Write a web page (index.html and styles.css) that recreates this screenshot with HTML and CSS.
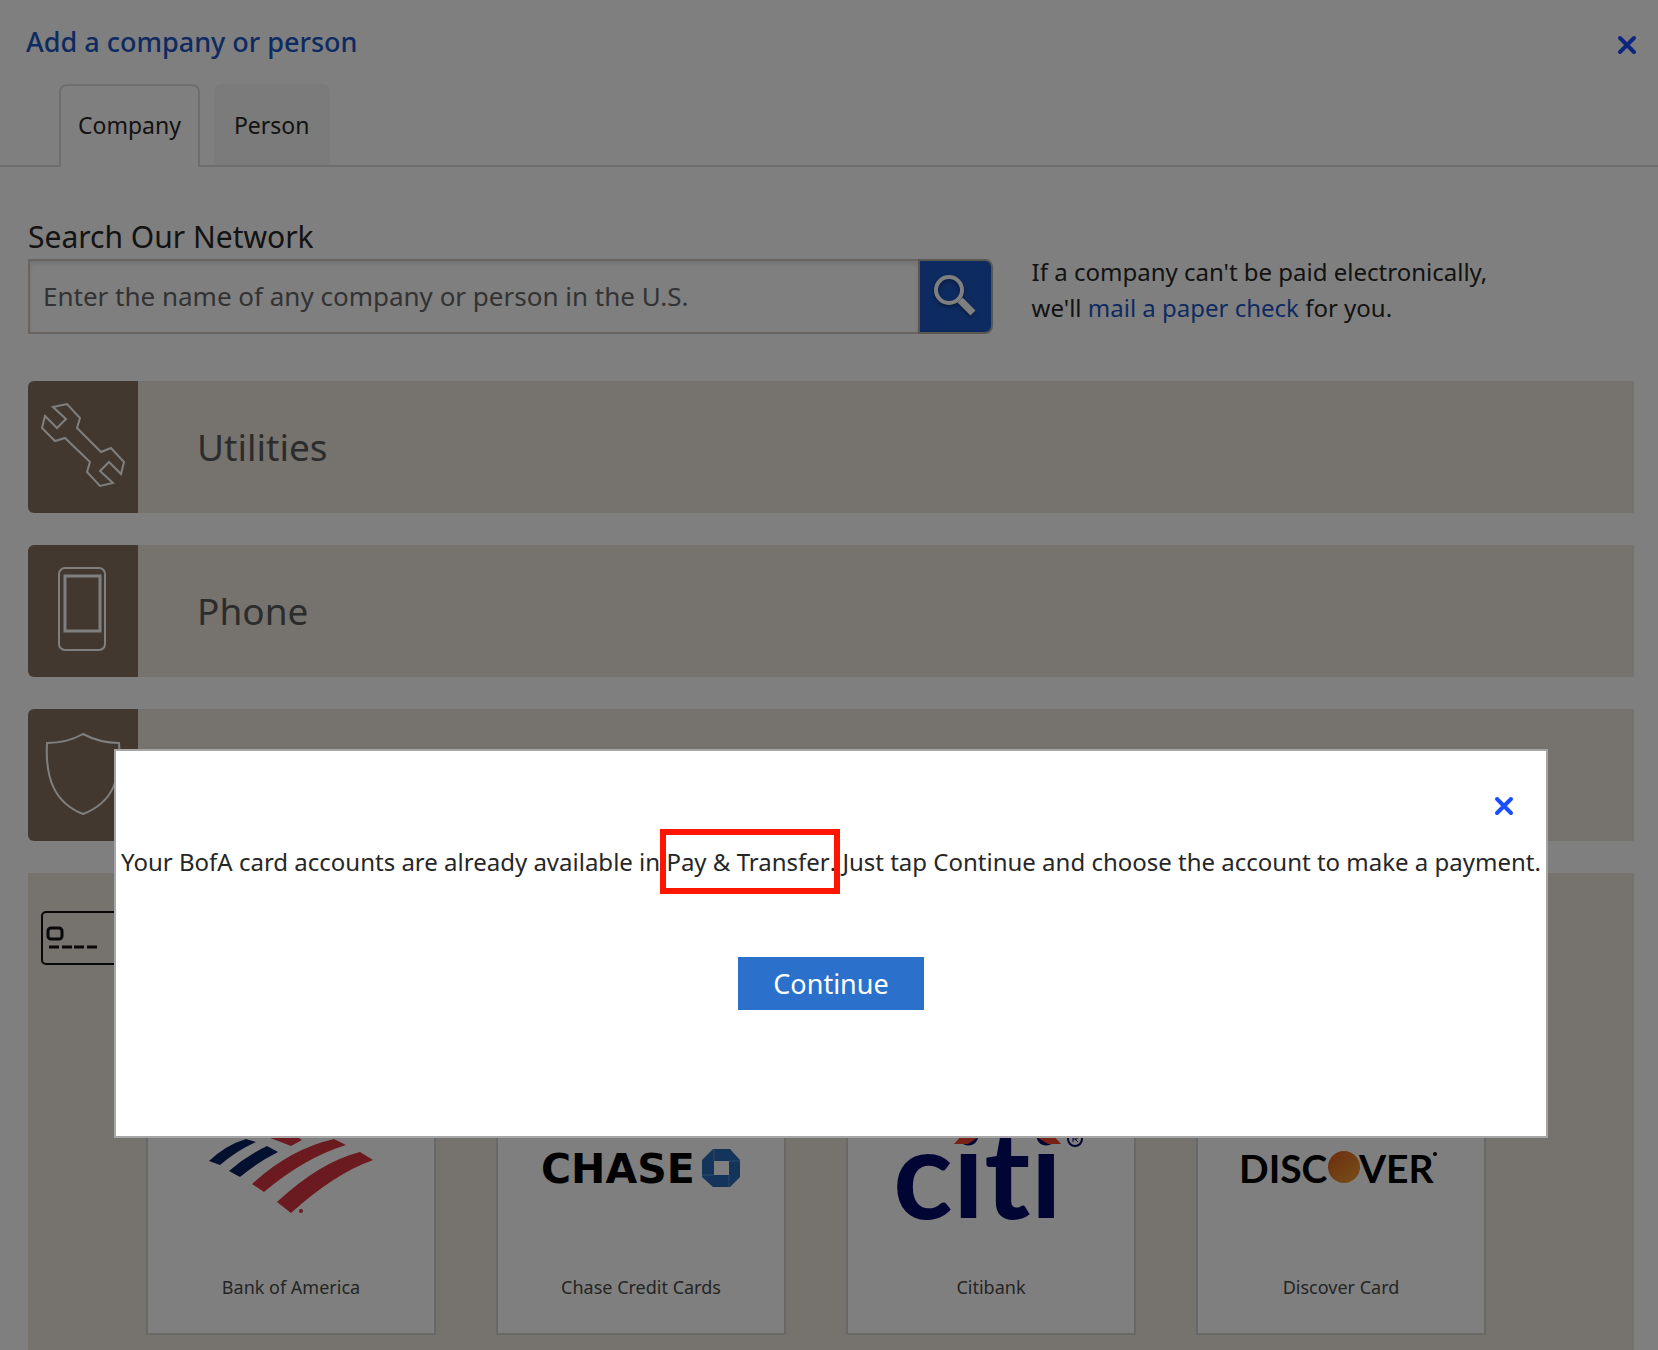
FILE: index.html
```html
<!DOCTYPE html>
<html lang="en">
<head>
<meta charset="utf-8">
<title>Add a company or person</title>
<link rel="stylesheet" href="styles.css">
</head>
<body>
<div class="page">
  <header class="header">
    <h1 class="title">Add a company or person</h1>
    <button class="close" type="button" aria-label="Close">
      <svg width="20" height="20" viewBox="0 0 20 20"><path d="M3 3L17 17M17 3L3 17" stroke="currentColor" stroke-width="4" stroke-linecap="round"/></svg>
    </button>
  </header>
  <nav class="tabs">
    <button class="tab tab-active" type="button">Company</button>
    <button class="tab" type="button">Person</button>
  </nav>
  <main class="main">
    <label class="search-label" for="search">Search Our Network</label>
    <div class="search-row">
      <form class="search">
        <input class="search-input" id="search" type="text" placeholder="Enter the name of any company or person in the U.S.">
        <button class="search-button" type="button" aria-label="Search">
          <svg class="search-icon" width="44" height="44" viewBox="0 0 44 44" fill="none" stroke="#fff"><circle cx="16" cy="15" r="13" stroke-width="4"/><path d="M27 25L40 38" stroke-width="7"/></svg>
        </button>
      </form>
      <p class="hint">If a company can't be paid electronically,<br>we'll <a class="link" href="#check">mail a paper check</a> for you.</p>
    </div>
    <section class="category">
      <div class="category-icon">
        <svg width="86" height="86" viewBox="0 0 86 86" fill="none" stroke="#fff" stroke-width="2"><path d="M13 5L27 2L40 16L37 26L61 50L71 46L84 60L81 72L69 60L60 69L73 81L60 84L47 70L50 60L25 36L15 39L2 26L5 14L17 26L26 17Z"/></svg>
      </div>
      <h2 class="category-name">Utilities</h2>
    </section>
    <section class="category">
      <div class="category-icon">
        <svg width="86" height="86" viewBox="0 0 86 86" fill="none" stroke="#fff" stroke-width="2"><rect x="19" y="2" width="46" height="82" rx="6"/><rect x="25" y="10" width="35" height="55" stroke-width="3"/></svg>
      </div>
      <h2 class="category-name">Phone</h2>
    </section>
    <section class="category">
      <div class="category-icon">
        <svg width="86" height="86" viewBox="0 0 86 86" fill="none" stroke="#fff" stroke-width="2"><path d="M7 13Q27 13 43 4Q60 13 79 13C82 49 72 73 43 84C15 73 5 49 7 13Z"/></svg>
      </div>
      <h2 class="category-name">Insurance</h2>
    </section>
    <section class="category-open">
      <div class="open-head">
        <svg width="86" height="56" viewBox="0 0 86 56" fill="none" stroke="#111" stroke-width="2"><rect x="2" y="2" width="82" height="52" rx="4"/><rect x="8" y="18" width="14" height="11" rx="3" stroke-width="3"/><path d="M9 37H19M22 37H32M34 37H44M47 37H57" stroke-width="3"/></svg>
        <h2 class="category-name">Credit Cards</h2>
      </div>
      <div class="cards">
        <a class="card" href="#boa"><svg class="logo" width="200" height="120" viewBox="191 1109 200 120" aria-hidden="true"><path fill="#082060" d="M209 1161Q226 1145 246 1139L256 1142Q236 1151 220 1165ZM229 1171Q246 1156 267 1146L278 1152Q258 1162 240 1177Z"/><path fill="#d6363e" d="M252 1184Q290 1149 334 1139L346 1145Q304 1158 264 1192ZM277 1202Q320 1162 360 1152L373 1160Q334 1174 291 1213ZM260 1134L280 1126L302 1140L291 1146Z"/><circle cx="301" cy="1211" r="2" fill="#d6363e"/></svg><span class="card-name">Bank of America</span></a>
        <a class="card" href="#chase"><svg class="logo" width="200" height="120" viewBox="541 1109 200 120" aria-hidden="true"><text x="541" y="1183" class="chase-word">CHASE</text><path fill="#2a68b8" fill-rule="evenodd" d="M713 1149H730L740 1160V1177L730 1187H713L702 1177V1160ZM714 1161V1175H729V1161Z"/><path d="M714 1149V1161M740 1161H729M729 1187V1175M702 1175H714" stroke="#5d94cf"/></svg><span class="card-name">Chase Credit Cards</span></a>
        <a class="card" href="#citi"><svg class="logo" width="200" height="120" viewBox="891 1109 200 120" aria-hidden="true"><text x="893" y="1219" class="citi-word">citi</text><path d="M954 1144Q1007 1082 1061 1144H1048Q1007 1115 968 1144Z" fill="#f0402a"/><circle cx="1075" cy="1139" r="7" fill="none" stroke="#000a68" stroke-width="2"/><path d="M1073 1142V1136H1077V1139H1073M1075 1139L1078 1142" fill="none" stroke="#000a68"/></svg><span class="card-name">Citibank</span></a>
        <a class="card" href="#discover"><svg class="logo" width="200" height="120" viewBox="1241 1109 200 120" aria-hidden="true"><defs><linearGradient id="sun" x2="1" y2="1"><stop stop-color="#d85a20"/><stop offset="1" stop-color="#f0a030"/></linearGradient></defs><text x="1239" y="1183" class="discover-word">DISC</text><circle cx="1344" cy="1167" r="16" fill="url(#sun)"/><text x="1359" y="1183" class="discover-word">VER</text><circle cx="1435" cy="1154" r="2"/></svg><span class="card-name">Discover Card</span></a>
      </div>
    </section>
  </main>
</div>
<div class="overlay">
  <div class="dialog" role="dialog" aria-modal="true" aria-label="Pay and Transfer">
    <button class="close dialog-close" type="button" aria-label="Close">
      <svg width="20" height="20" viewBox="0 0 20 20"><path d="M3 3L17 17M17 3L3 17" stroke="currentColor" stroke-width="4" stroke-linecap="round"/></svg>
    </button>
    <p class="message">Your BofA card accounts are already available in <span class="highlight">Pay &amp; Transfer</span>. Just tap Continue and choose the account to make a payment.</p>
    <button class="continue" type="button">Continue</button>
  </div>
</div>
</body>
</html>
```
FILE: styles.css
```css
* { box-sizing: border-box; }
body { margin: 0; height: 100vh; overflow: hidden; background: #fff; color: #262626; font-family: "Noto Sans", "Open Sans", sans-serif; }
button { font: inherit; margin: 0; padding: 0; border: 0; cursor: pointer; }
h1, h2, p { margin: 0; font-weight: 400; }
.header { display: flex; justify-content: space-between; align-items: flex-start; height: 84px; padding: 0 21px 0 26px; color: #1c56c3; }
.header .close { margin-top: 35px; }
.title { font-size: 27px; line-height: 84px; font-weight: 500; }
.close { display: flex; background: none; color: #1a4dff; }
.tabs { display: flex; gap: 14px; height: 83px; padding-left: 59px; border-bottom: 2px solid #dcdcdc; }
.tab { height: 81px; padding: 0 20px; border-radius: 8px 8px 0 0; background: #f6f6f6; color: #262626; font-size: 23px; }
.tab-active { height: 83px; padding: 0 17px 4px; border: 2px solid #dcdcdc; border-bottom: 0; background: #fff; }
.main { padding: 48px 24px 0 28px; }
.search-label { display: block; font-size: 30px; line-height: 44px; }
.search-row { display: flex; gap: 39px; }
.search { display: flex; flex: 0 0 calc(60% + 1px); height: 75px; }
.search-input { flex: 1; min-width: 0; padding: 0 13px 2px; border: 2px solid #d3c9c1; border-right: 0; border-radius: 0; box-shadow: inset 0 3px 4px #e4e4e4; background: #fff; font: inherit; font-size: 26px; color: #262626; }
.search-input::placeholder { color: #666; opacity: 1; }
.search-button { display: flex; align-items: center; justify-content: center; width: 75px; border: 2px solid #b5aca5; border-radius: 0 8px 8px 0; background: #1c56c3; }
.search-icon { filter: drop-shadow(0 2px 2px rgba(0,0,0,.4)); }
.hint { margin-top: -5px; font-size: 24px; line-height: 36px; }
.link { color: #1c56c3; text-decoration: none; }
.category { display: flex; height: 132px; margin-top: 32px; border-radius: 6px 0 0 6px; background: #ede6dc; }
.search-row + .category { margin-top: 47px; }
.category-icon { display: flex; justify-content: center; width: 110px; padding-top: 21px; border-radius: 6px 0 0 6px; background: #85705f; }
.category-name { padding-left: 59px; color: #595959; font-size: 37px; line-height: 132px; }
.category-open { margin-top: 32px; background: #ede6dc; }
.open-head { display: flex; align-items: flex-start; height: 132px; padding: 37px 12px; }
.open-head .category-name { line-height: 56px; }
.cards { display: grid; grid-template-columns: repeat(4, 290px); justify-content: center; gap: 60px; padding: 60px 30px 60px 0; }
.card { display: flex; flex-direction: column; align-items: center; justify-content: flex-end; height: 270px; padding-bottom: 30px; border: 2px solid #d0d0d0; background: #fff; color: #4a4a4a; text-decoration: none; font-size: 18px; line-height: 32px; }
.logo { margin-bottom: 42px; overflow: visible; }
.overlay { position: fixed; inset: 0; display: flex; align-items: flex-start; padding: 749px 110px 0 114px; background: rgba(0,0,0,.5); }
.dialog { display: flex; flex-direction: column; align-items: center; width: 100%; height: 389px; border: 2px solid #a6a6a6; background: #fff; }
.dialog-close { align-self: flex-end; margin: 45px 32px 0 0; }
.message { margin-top: 28px; font-size: 24px; line-height: 36px; white-space: nowrap; }
.highlight { position: relative; margin-right: -4px; padding: 10px 4px 10px 0; box-shadow: 0 0 0 6px #ff1500; }
.continue { width: 186px; height: 53px; margin-top: 77px; background: #2b71cb; color: #fff; font-size: 27px; }
.chase-word { font: 700 41px "DejaVu Sans", sans-serif; fill: #000; }
.citi-word { font: 700 124px Lato, sans-serif; font-variant-ligatures: none; fill: #000a68; }
.discover-word { font: 700 39px Lato, sans-serif; fill: #000; }
```
